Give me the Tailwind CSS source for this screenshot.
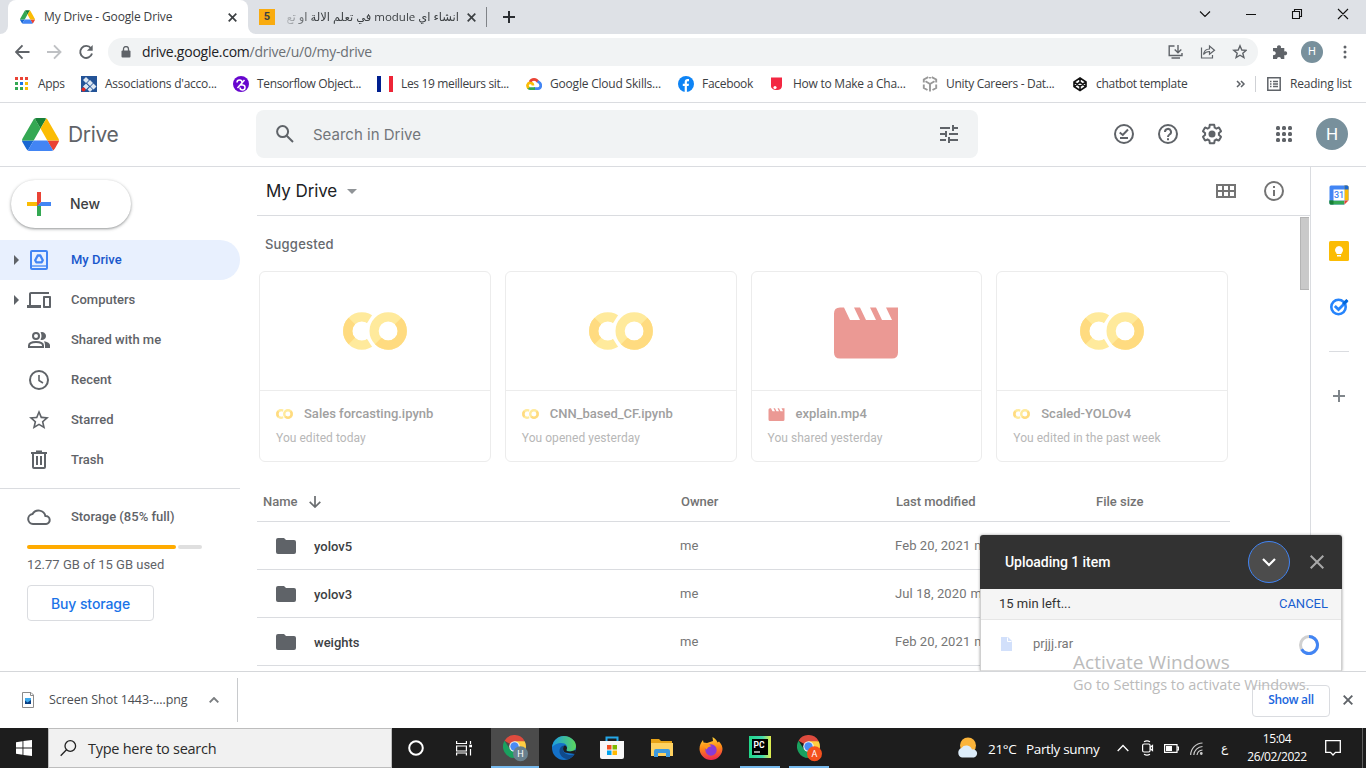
<!DOCTYPE html>
<html lang="en">
<head>
<meta charset="utf-8">
<title>My Drive - Google Drive</title>
<script src="https://cdn.jsdelivr.net/npm/@tailwindcss/browser@4"></script>
</head>
<body class="w-[1366px] h-[768px] overflow-hidden bg-white relative flex flex-col font-['Roboto',sans-serif]">

<!-- shared icon symbols -->
<svg class="hidden">
  <symbol id="colab" viewBox="0 0 64 38">
    <circle cx="18.800" cy="19" r="14.100" fill="none" stroke="#ffea9c" stroke-width="9.200"/>
    <path d="M8.830 9.030A14.100 14.100 0 0 0 8.830 28.970" fill="none" stroke="#ffdb80" stroke-width="9.200"/>
    <path d="M19 19L33 -3H42V41H33Z" fill="#fff"/>
    <path d="M18.800 9.900A9.100 9.100 0 0 1 18.800 28.100Z" fill="#fff"/>
    <circle cx="45.200" cy="19" r="20" fill="#fff"/>
    <circle cx="45.200" cy="19" r="14.100" fill="none" stroke="#ffea9c" stroke-width="9.200"/>
    <path d="M55.170 9.030A14.100 14.100 0 0 1 35.230 28.970" fill="none" stroke="#ffdb80" stroke-width="9.200"/>
  </symbol>
  <symbol id="movie" viewBox="0 0 64 52">
    <path d="M6 .5H10L16 13H26L20 .5H26L32 13H42L36 .5H42L48 13H58L52 .5H64V45.500Q64 51.500 58 51.500H6Q0 51.500 0 45.500V6.500Q0 .500 6 .500Z" fill="#eb9994"/>
  </symbol>
  <symbol id="drive" viewBox="0 0 87.3 78">
    <path d="m6.600 66.850 3.850 6.650c.8 1.400 1.950 2.500 3.300 3.300l13.750-23.800h-27.500c0 1.550.4 3.100 1.200 4.500z" fill="#1967d2"/>
    <path d="m43.650 25-13.750-23.800c-1.350.8-2.500 1.900-3.300 3.300l-25.400 44a9.060 9.060 0 0 0 -1.200 4.500h27.500z" fill="#34a853"/>
    <path d="m73.550 76.800c1.350-.8 2.500-1.900 3.300-3.300l1.600-2.750 7.650-13.250c.8-1.400 1.200-2.950 1.200-4.500h-27.502l5.852 11.500z" fill="#ea4335"/>
    <path d="m43.650 25 13.750-23.800c-1.350-.8-2.900-1.200-4.500-1.200h-18.500c-1.600 0-3.150.450-4.500 1.200z" fill="#188038"/>
    <path d="m59.800 53h-32.300l-13.750 23.800c1.350.8 2.900 1.200 4.500 1.200h50.800c1.600 0 3.150-.45 4.500-1.200z" fill="#4285f4"/>
    <path d="m73.400 26.500-12.700-22c-.8-1.400-1.950-2.500-3.300-3.300l-13.750 23.800 16.150 28h27.450c0-1.550-.4-3.100-1.200-4.500z" fill="#fbbc04"/>
  </symbol>
  <symbol id="chrome" viewBox="0 0 48 48">
    <path d="M24 24L3.200 12A24 24 0 0 1 44.800 12Z" fill="#dd4b3e"/>
    <path d="M33.500 29.500L24 48A24 24 0 0 0 45.300 13H24Z" fill="#ffcd42"/>
    <path d="M14.500 29.500L3.200 12A24 24 0 0 0 24 48L33.500 29.500Z" fill="#1aa15f"/>
    <circle cx="24" cy="24" r="11" fill="#f1f1f1"/><circle cx="24" cy="24" r="8.700" fill="#4a8af4"/>
  </symbol>
  <symbol id="folder" viewBox="0 0 20 16"><path d="M2 0H8L10 2H18A2 2 0 0 1 20 4V14A2 2 0 0 1 18 16H2A2 2 0 0 1 0 14V2A2 2 0 0 1 2 0Z" fill="#5f6368"/></symbol>
</svg>

<!-- tab strip -->
<div class="h-[34px] bg-[#dee1e6] flex font-['Open_Sans',sans-serif] text-[12px] text-[#3c4043] shrink-0">
  <div class="w-2 bg-white"><div class="w-2 h-full bg-[#dee1e6] rounded-br-lg"></div></div>
  <div class="w-[240px] bg-white rounded-t-lg flex items-center pl-3">
    <svg class="w-[15px] h-[14px]"><use href="#drive"/></svg>
    <span class="ml-[9px] w-[129px] whitespace-nowrap tracking-[-0.13px]">My Drive - Google Drive</span>
    <svg class="ml-[55px] w-[9px] h-[9px]" viewBox="0 0 9 9" stroke="#3c4043" stroke-width="1.700"><path d="M.7.7l7.600 7.600M8.300.7L.7 8.300"/></svg>
  </div>
  <div class="w-[240px] bg-white"><div class="h-full bg-[#dee1e6] rounded-bl-lg flex items-center pl-[11px]">
    <div class="size-4 bg-[#f9ab0f] text-[#3c4043] font-bold text-[11px] leading-4 text-center font-['Roboto']">5</div>
    <div dir="rtl" class="ml-1 w-[180px] whitespace-nowrap text-[11.5px] font-['Open_Sans','DejaVu_Sans',sans-serif] [mask-image:linear-gradient(to_right,transparent,black_34px)]">انشاء اي module في تعلم الالة او تع</div>
    <svg class="ml-2 w-[9px] h-[9px] shrink-0" viewBox="0 0 9 9" stroke="#3c4043" stroke-width="1.700"><path d="M.7.7l7.600 7.600M8.300.7L.7 8.300"/></svg>
    <div class="ml-[10px] w-px h-5 bg-[#808388] shrink-0"></div>
  </div></div>
  <svg class="ml-[15px] w-3 self-center" viewBox="0 0 12 12" height="12" stroke="#2a2d31" stroke-width="2"><path d="M6 0V12M0 6H12"/></svg>
  <div class="ml-auto w-[169px] flex items-center -mt-[6px]">
    <svg width="169" height="12" viewBox="0 0 169 12" fill="none" stroke="#111" stroke-width="1.100"><path d="M3 3.500L8 8.500L13 3.500M49 6.500H59M95.500 3.500H102.500V10.500H95.500ZM97.500 3.500V1.500H104.500V8.500H102.500M141 1L151 11M151 1L141 11"/></svg>
  </div>
</div>

<!-- toolbar -->
<div class="h-[35px] flex items-center shrink-0">
  <svg class="ml-[15px]" width="80" height="16" viewBox="0 0 80 16" fill="none" stroke="#5f6368" stroke-width="1.900">
    <path d="M14.500 8H1M7.500 1.300L1 8L7.500 14.700"/><path stroke="#bfc1c4" d="M32 8H45.500M39 1.300L45.500 8L39 14.700"/><path d="M76 4.300A6 6 0 1 0 77 9.500"/><path d="M77.700 1V6.800H71.900Z" fill="#5f6368" stroke="none"/>
  </svg>
  <div class="ml-[13px] w-[1150px] h-7 rounded-full bg-[#f1f3f4] flex items-center">
    <svg class="ml-[13px]" width="10" height="12" viewBox="0 0 10 12"><rect x="0.500" y="4.500" width="9" height="7" rx="1" fill="#5f6368"/><path d="M2.500 5V3A2.500 2.500 0 0 1 7.500 3V5" fill="none" stroke="#5f6368" stroke-width="1.300"/></svg>
    <span class="ml-[11px] font-['Open_Sans',sans-serif] text-[14px] text-[#202124] tracking-[-0.25px] whitespace-nowrap">drive.google.com<span class="text-[#6b6f74]">/drive/u/0/my-drive</span></span>
    <svg class="ml-auto mr-[11px]" width="80" height="16" viewBox="0 0 80 16" fill="none" stroke="#5f6368" stroke-width="1.400">
      <path d="M7.500 2H2.200V11.500H15V9M4.500 14H13M11 1V8M7.700 5.500L11 8.700L14.300 5.500"/>
      <path stroke-width="1.200" d="M34.500 3.500V14H45.500V11M36.500 10.500C37 7 39 5 42.500 5V2L47.500 6.200L42.500 10.300V7.500C40 7.500 38 8.500 36.500 10.500Z"/>
      <path d="M73 1.800L74.800 6L79.200 6.300L75.800 9.200L76.900 13.600L73 11.200L69.100 13.600L70.200 9.200L66.800 6.300L71.200 6Z"/>
    </svg>
  </div>
  <svg class="ml-[14px]" width="16" height="16" viewBox="0 0 16 16" fill="#5f6368"><path d="M1 4H5.200A2 2 0 1 1 8.800 4H12.300V7.400A2 2 0 1 1 12.300 11V15H9A2 2 0 1 0 5 15H1V11A2 2 0 1 0 1 7.300Z"/></svg>
  <div class="ml-[13px] size-[22px] rounded-full bg-[#78909c] text-white text-[11px] leading-[22px] text-center">H</div>
  <svg class="ml-[20px]" width="4" height="14" viewBox="0 0 4 14" fill="#5f6368"><circle cx="2" cy="2" r="1.500"/><circle cx="2" cy="7" r="1.500"/><circle cx="2" cy="12" r="1.500"/></svg>
</div>

<!-- bookmarks -->
<div class="h-[34px] pb-1 border-b border-[#dadce0] flex items-center pl-[15px] font-['Open_Sans',sans-serif] text-[12px] text-[#3c4043] tracking-[-0.3px] whitespace-nowrap shrink-0">
  <div class="w-[66px] flex items-center gap-[10px]">
    <svg width="13" height="13" viewBox="0 0 13 13"><path fill="#ea4335" d="M0 0h3v3H0zM5 0h3v3H5zM10 0h3v3h-3z"/><path fill="#34a853" d="M0 5h3v3H0zM0 10h3v3H0z"/><path fill="#1a73e8" d="M5 5h3v3H5z"/><path fill="#fbbc04" d="M10 5h3v3h-3zM10 10h3v3h-3z"/><path fill="#34a853" d="M5 10h3v3H5z"/></svg><span>Apps</span>
  </div>
  <div class="w-[152px] flex items-center gap-2">
    <svg width="16" height="16" viewBox="0 0 16 16"><path d="M0 0h16v16H0z" fill="#235397"/><path d="M5 1L8 4L5 7L2 4ZM9 4L12 7L9 10L6 7ZM12.500 7.500L15.500 10.500L12.500 13.500L9.500 10.500ZM5 7.500L8 10.500L5 13.500L2 10.500ZM9 11L11.500 13.500L9 16L6.500 13.500Z" fill="#dde7f2"/><circle cx="2.500" cy="13.500" r="2" fill="#e52620"/></svg><span class="tracking-[-0.25px]">Associations d'acco...</span>
  </div>
  <div class="w-[144px] flex items-center gap-2">
    <svg width="16" height="16" viewBox="0 0 16 16" fill="none"><circle cx="8" cy="8" r="8" fill="#6706ce"/><path d="M4 6.500A2.500 2.500 0 1 1 6.500 9H9.500A2.500 2.500 0 1 1 7 11.500M4.500 12L11.500 4" stroke="#fff" stroke-width="1.500"/></svg><span class="tracking-[-0.36px]">Tensorflow Object...</span>
  </div>
  <div class="w-[149px] flex items-center gap-2">
    <svg width="16" height="16" viewBox="0 0 16 16"><path d="M0 0h4v16H0z" fill="#001f8f"/><path d="M12 0h4v16h-4z" fill="#ee2436"/></svg><span class="tracking-[-0.35px]">Les 19 meilleurs sit...</span>
  </div>
  <div class="w-[152px] flex items-center gap-2">
    <svg width="16" height="16" viewBox="0 0 16 16" fill="none" stroke-width="2.700"><path d="M4 6A4.300 4.300 0 0 1 12 6" stroke="#ea4335"/><path d="M11.500 5.500C16 7 15.500 12.500 12 12.700H8" stroke="#4285f4"/><path d="M9 12.700H4C3 12.700 2.500 12.300 2 11.500" stroke="#34a853"/><path d="M2.700 12C.5 10 1.500 6.500 4.500 7C6.500 7 7 8.500 7 9.500" stroke="#fbbc04"/></svg><span class="tracking-[-0.2px]">Google Cloud Skills...</span>
  </div>
  <div class="w-[91px] flex items-center gap-2">
    <svg width="16" height="16" viewBox="0 0 16 16"><circle cx="8" cy="8" r="8" fill="#0e84f5"/><path d="M6.700 16V10H4.800V7.700H6.700V6C6.700 4 7.800 3 9.600 3L11 3.100V5.200H10C9.200 5.200 8.900 5.700 8.900 6.300V7.700H11L10.600 10H8.900V16Z" fill="#fff"/></svg><span>Facebook</span>
  </div>
  <div class="w-[153px] flex items-center gap-2">
    <svg width="16" height="16" viewBox="0 0 16 16"><path d="M2 1.500H13V9.500C13 12.500 11 14 8 14C4.500 14 2 12.500 2 10Z" fill="#f32742"/><circle cx="6" cy="11.500" r="1.600" fill="#fff"/></svg><span class="tracking-[-0.25px]">How to Make a Cha...</span>
  </div>
  <div class="w-[150px] flex items-center gap-2">
    <svg width="16" height="16" viewBox="0 0 16 16" fill="none" stroke="#999" stroke-width="1.900"><path d="M6.300 1.200L1.800 3.500V6.500M9.700 1.200L14.200 3.500V6.500M1.800 8.500V12L5.500 14M14.200 8.500V12L10.500 14M8 8V15.500M8 8L3.500 5.300M8 8L12.500 5.300M8 1V2.500"/></svg><span>Unity Careers - Dat...</span>
  </div>
  <div class="w-[164px] flex items-center gap-2">
    <svg width="16" height="16" viewBox="0 0 16 16" fill="none" stroke="#111" stroke-width="1.600"><path d="M8 2L14 6V10.500L8 14.500L2 10.500V6ZM2 6L8 10.200L14 6M2 10.500L8 6.300L14 10.500M8 2V6.300M8 10.200V14.500"/></svg><span>chatbot template</span>
  </div>
  <svg width="10" height="8" viewBox="0 0 10 8" fill="none" stroke="#5f6368" stroke-width="1.500"><path d="M1 1L4 4L1 7M5 1L8 4L5 7"/></svg>
  <div class="ml-[9px] w-px h-4 bg-[#cfd1d5]"></div>
  <svg class="ml-[11px]" width="14" height="14" viewBox="0 0 14 14" fill="none" stroke="#5f6368" stroke-width="1.500"><path d="M.8.8H13.200V13.200H.8ZM3 4.500H4.500M6 4.500H11M3 7H4.500M6 7H11M3 9.500H4.500M6 9.500H11"/></svg>
  <span class="ml-[9px] tracking-[-0.22px]">Reading list</span>
</div>

<!-- Drive header -->
<header class="h-16 border-b border-[#dadce0] flex items-center shrink-0 text-[#5f6368]">
  <svg class="ml-[21.5px] -mt-[1px]" width="37" height="33" viewBox="0 0 87.3 78"><use href="#drive"/></svg>
  <span class="ml-[9.5px] w-[188px] font-['Inter',sans-serif] text-[21px] tracking-[-0.35px]">Drive</span>
  <div class="w-[722px] h-12 -mt-0.5 rounded-lg bg-[#f1f3f4] flex items-center">
    <svg class="ml-5" width="18" height="18" viewBox="0 0 18 18" fill="none" stroke="#5f6368" stroke-width="2"><circle cx="6.600" cy="6.600" r="5.500"/><path d="M10.700 10.700L17 17"/></svg>
    <span class="ml-[19px] mt-[3px] font-['Inter',sans-serif] text-[15px] text-[#72767a]">Search in Drive</span>
    <svg class="ml-auto mr-[20px]" width="18" height="18" viewBox="0 0 18 18" fill="none" stroke="#5f6368" stroke-width="2"><path d="M0 3H10M13 3H18M13 0V6M0 9H6M6 6V12M9 9H18M0 15H6M9 15H18M9 12V18"/></svg>
  </div>
  <svg class="ml-[136px] -mt-0.5" width="20" height="20" viewBox="0 0 20 20" fill="none" stroke="#5f6368" stroke-width="2"><circle cx="10" cy="10" r="9"/><path d="M5.700 8.500L8.800 11L14 5.500M6 14H14"/></svg>
  <svg class="ml-6 -mt-0.5" width="20" height="20" viewBox="0 0 20 20" fill="none" stroke="#5f6368" stroke-width="2"><circle cx="10" cy="10" r="9"/><path d="M7 8A3 3 0 1 1 11.500 10.500Q10 11.400 10 13M10 14.300V16.300"/></svg>
  <svg class="ml-[23px] -mt-0.5" width="22" height="22" viewBox="1 1 22 22" fill="#5f6368"><path d="M13.850 22.250h-3.700c-.74 0-1.360-.54-1.450-1.270l-.27-1.890c-.27-.14-.53-.29-.79-.46l-1.800.72c-.7.260-1.470-.03-1.810-.65L2.200 15.530c-.35-.66-.2-1.440.36-1.880l1.530-1.190c-.01-.15-.02-.3-.02-.46 0-.15.010-.31.020-.46l-1.520-1.190c-.59-.45-.74-1.260-.37-1.880l1.850-3.190c.34-.62 1.110-.9 1.790-.63l1.810.73c.26-.17.52-.32.78-.46l.27-1.910c.09-.7.71-1.250 1.440-1.250h3.700c.74 0 1.360.54 1.450 1.270l.27 1.890c.27.14.53.29.79.46l1.800-.72c.71-.26 1.480.03 1.820.65l1.840 3.180c.36.66.2 1.440-.36 1.880l-1.520 1.190c.01.15.02.3.02.46s-.01.31-.02.46l1.520 1.190c.56.45.72 1.230.37 1.860l-1.860 3.220c-.34.62-1.110.9-1.800.63l-1.800-.72c-.26.17-.52.32-.78.46l-.27 1.910c-.1.680-.72 1.220-1.460 1.220zm-3.230-2h2.760l.37-2.550.53-.22c.44-.18.88-.44 1.340-.78l.45-.34 2.380.96 1.380-2.400-2.030-1.580.07-.56c.03-.26.06-.51.06-.78s-.03-.53-.06-.78l-.07-.56 2.030-1.580-1.390-2.400-2.390.96-.45-.35c-.42-.32-.87-.58-1.330-.77l-.52-.22-.37-2.550h-2.760l-.37 2.550-.53.21c-.44.19-.88.44-1.340.79l-.45.33-2.380-.95-1.390 2.390 2.030 1.580-.07.560a7 7 0 0 0-.06.790c0 .26.020.53.060.78l.07.56-2.030 1.580 1.380 2.400 2.390-.96.450.35c.43.33.86.58 1.330.77l.53.22.380 2.550z"/><circle cx="12" cy="12" r="3.500"/></svg>
  <svg class="ml-[53px] -mt-0.5" width="16" height="16" viewBox="0 0 16 16" fill="#5f6368"><g><rect width="4" height="4" rx="1.500"/><rect x="6" width="4" height="4" rx="1.500"/><rect x="12" width="4" height="4" rx="1.500"/><rect y="6" width="4" height="4" rx="1.500"/><rect x="6" y="6" width="4" height="4" rx="1.500"/><rect x="12" y="6" width="4" height="4" rx="1.500"/><rect y="12" width="4" height="4" rx="1.500"/><rect x="6" y="12" width="4" height="4" rx="1.500"/><rect x="12" y="12" width="4" height="4" rx="1.500"/></g></svg>
  <div class="ml-6 -mt-0.5 size-8 rounded-full bg-[#78909c] text-white text-[17px] leading-8 text-center">H</div>
</header>

<!-- body -->
<div class="h-[504px] flex shrink-0 overflow-hidden">
  <!-- navigation -->
  <nav class="w-[257px] shrink-0 text-[13px] font-medium text-[#5f6368]">
    <div class="ml-[11px] mt-[13px] w-[120px] h-12 rounded-full shadow-[0_1px_2px_rgba(60,64,67,.35),0_1px_3px_1px_rgba(60,64,67,.18)] flex items-center">
      <svg class="ml-4" width="24" height="24" viewBox="0 0 24 24"><path fill="#fbbc04" d="M0 10h12v4H0z"/><path fill="#34a853" d="M10 12h4v12h-4z"/><path fill="#4285f4" d="M10 14l4-4h10v4z"/><path fill="#ea4335" d="M10 0h4v10l-4 4z"/></svg>
      <span class="ml-[19px] -mt-[2px] font-['Inter',sans-serif] text-[14px] text-[#3c4043] tracking-[-0.1px]">New</span>
    </div>
    <div class="mt-3 h-10 w-60 rounded-r-full bg-[#e8f0fe] text-[#1957cc] flex items-center">
      <svg class="ml-[14px]" width="5" height="10" viewBox="0 0 5 10" fill="#5f6368"><path d="M0 0L5 5L0 10Z"/></svg>
      <svg class="ml-[11px]" width="18" height="20" viewBox="0 0 18 20"><rect x="1" y="1" width="16" height="18" rx="1" fill="none" stroke="#4285f4" stroke-width="2"/><path d="M1 16H17" stroke="#4285f4" stroke-width="1.300"/><path d="M7.700 5.500H10.300L12.800 10.300L11.700 12.300H6.300L5.200 10.300Z" fill="none" stroke="#4285f4" stroke-width="2.300" stroke-linejoin="round"/></svg>
      <span class="ml-[23px]">My Drive</span>
    </div>
    <div class="h-10 flex items-center">
      <svg class="ml-[14px]" width="5" height="10" viewBox="0 0 5 10" fill="#5f6368"><path d="M0 0L5 5L0 10Z"/></svg>
      <svg class="ml-2" width="24" height="24" viewBox="0 0 24 24" fill="#5f6368"><path d="M4 6h18V4H4c-1.100 0-2 .9-2 2v11H0v3h14v-3H4V6zm19 2h-6c-.55 0-1 .45-1 1v10c0 .55.450 1 1 1h6c.55 0 1-.45 1-1V9c0-.55-.45-1-1-1zm-1 10h-4v-8h4v8z"/></svg>
      <span class="ml-5">Computers</span>
    </div>
    <div class="h-10 flex items-center pl-[27px] gap-5">
      <svg width="24" height="24" viewBox="0 0 24 24"><g fill="none" stroke="#5f6368" stroke-width="2"><circle cx="9" cy="8" r="3"/><path d="M2 19V17.500C2 15 6 14 9 14S16 15 16 17.500V19Z"/></g><path fill="#5f6368" d="M13.500 4.300A4 4 0 1 1 13.500 11.700Q15.500 8 13.500 4.300ZM17 13.300C20 13.800 23 15 23 17.500V20H18V17.500Q18 15 17 13.300Z"/></svg>
      <span>Shared with me</span>
    </div>
    <div class="h-10 flex items-center pl-[27px] gap-5">
      <svg width="24" height="24" viewBox="0 0 24 24" fill="none" stroke="#5f6368" stroke-width="2"><circle cx="12" cy="12" r="9"/><path stroke-width="1.600" d="M12 7V12.500L16 15"/></svg>
      <span>Recent</span>
    </div>
    <div class="h-10 flex items-center pl-[27px] gap-5">
      <svg width="24" height="24" viewBox="0 0 24 24" fill="#5f6368"><path d="M22 9.240l-7.190-.62L12 2 9.190 8.630 2 9.240l5.460 4.730L5.820 21 12 17.270 18.180 21l-1.630-7.030L22 9.240zM12 15.400l-3.760 2.270 1-4.280-3.320-2.880 4.380-.38L12 6.100l1.710 4.040 4.380.38-3.320 2.880 1 4.280L12 15.400z"/></svg>
      <span>Starred</span>
    </div>
    <div class="h-10 flex items-center pl-[27px] gap-5">
      <svg width="24" height="24" viewBox="0 0 24 24" fill="none" stroke="#5f6368" stroke-width="2"><path d="M4 5H20M9 3.500H15M6 5V19Q6 20 7 20H17Q18 20 18 19V5M10 8V17M14 8V17"/></svg>
      <span>Trash</span>
    </div>
    <div class="mt-2 w-60 h-px bg-[#dadce0]"></div>
    <div class="mt-4 h-6 flex items-center pl-[27px] gap-5">
      <svg width="24" height="24" viewBox="0 0 24 24" fill="none" stroke="#5f6368" stroke-width="2"><path d="M6 19A5 5 0 0 1 5.500 9.050A7 7 0 0 1 18.400 11A4 4 0 0 1 19 19Z"/></svg>
      <span>Storage (85% full)</span>
    </div>
    <div class="ml-[27px] mt-4 w-[175px] h-1 flex gap-[2px]"><div class="w-[149px] bg-[#ffab00] rounded-full"></div><div class="flex-1 bg-[#dfdfdf] rounded-full"></div></div>
    <div class="ml-[27px] mt-[6px] leading-5 font-normal">12.77 GB of 15 GB used</div>
    <div class="ml-[27px] mt-[10px] w-[127px] h-9 rounded border border-[#dadce0] text-[#1a73e8] text-[14px] leading-[35px] text-center font-['Inter',sans-serif] tracking-[-0.1px]">Buy storage</div>
  </nav>

  <!-- file area -->
  <main class="w-[1053px] shrink-0 flex flex-col">
    <div class="h-[49px] border-b border-[#dadce0] flex items-center text-[#202124] shrink-0">
      <span class="ml-[9px] mt-[2px] font-['Inter',sans-serif] text-[17px] tracking-[-0.1px]">My Drive</span>
      <svg class="ml-[10px]" width="10" height="5" viewBox="0 0 10 5" fill="#909497"><path d="M0 0H10L5 5Z"/></svg>
      <svg class="ml-auto" width="20" height="14" viewBox="0 0 20 14" fill="none" stroke="#747474" stroke-width="2"><path d="M1 1H19V13H1ZM1 7H19M7 1V13M13 1V13"/></svg>
      <svg class="ml-7 mr-[26px]" width="20" height="20" viewBox="0 0 20 20" fill="none" stroke="#747474" stroke-width="2"><circle cx="10" cy="10" r="9"/><path d="M10 9V15M10 5V7"/></svg>
    </div>
    <div class="flex-1 flex">
      <div class="w-[973px]">
        <div class="ml-2 mt-[18px] h-5 leading-5 font-['Inter',sans-serif] font-medium text-[13px] text-[#66696d] tracking-[0.2px]">Suggested</div>
        <div class="ml-[2px] mt-[17px] w-[969px] h-[191px] grid grid-cols-4 gap-[14px] text-[12px] text-[#b7b7b7]">
          <div class="border border-[#ececec] rounded-md flex flex-col">
            <div class="h-[119px] border-b border-[#ececec] flex items-center justify-center"><svg width="64" height="38"><use href="#colab"/></svg></div>
            <div class="pl-4 pt-3">
              <div class="h-[22px] flex items-center gap-[11px] text-[13px] text-[#a0a0a0] font-medium"><svg width="17" height="10"><use href="#colab"/></svg>Sales forcasting.ipynb</div>
              <div class="mt-[3px] leading-5 tracking-[0.05px]">You edited today</div>
            </div>
          </div>
          <div class="border border-[#ececec] rounded-md flex flex-col">
            <div class="h-[119px] border-b border-[#ececec] flex items-center justify-center"><svg width="64" height="38"><use href="#colab"/></svg></div>
            <div class="pl-4 pt-3">
              <div class="h-[22px] flex items-center gap-[11px] text-[13px] text-[#a0a0a0] font-medium"><svg width="17" height="10"><use href="#colab"/></svg>CNN_based_CF.ipynb</div>
              <div class="mt-[3px] leading-5 tracking-[0.05px]">You opened yesterday</div>
            </div>
          </div>
          <div class="border border-[#ececec] rounded-md flex flex-col">
            <div class="h-[119px] border-b border-[#ececec] flex items-center justify-center"><svg width="64" height="52" class="mt-[3px]"><use href="#movie"/></svg></div>
            <div class="pl-4 pt-3">
              <div class="h-[22px] flex items-center gap-[11px] text-[13px] text-[#a0a0a0] font-medium"><svg width="17" height="13"><use href="#movie"/></svg>explain.mp4</div>
              <div class="mt-[3px] leading-5 tracking-[0.05px]">You shared yesterday</div>
            </div>
          </div>
          <div class="border border-[#ececec] rounded-md flex flex-col">
            <div class="h-[119px] border-b border-[#ececec] flex items-center justify-center"><svg width="64" height="38"><use href="#colab"/></svg></div>
            <div class="pl-4 pt-3">
              <div class="h-[22px] flex items-center gap-[11px] text-[13px] text-[#a0a0a0] font-medium"><svg width="17" height="10"><use href="#colab"/></svg>Scaled-YOLOv4</div>
              <div class="mt-[3px] leading-5 tracking-[0.05px]">You edited in the past week</div>
            </div>
          </div>
        </div>
        <div class="mt-[19px] h-[41px] pt-px border-b border-[#dadce0] flex items-center text-[13px] font-medium text-[#737373]">
          <div class="w-[424px] pl-[6px] flex items-center gap-[11px]">Name <svg width="12" height="12" viewBox="0 0 12 12" fill="none" stroke="#6a6d70" stroke-width="1.700"><path d="M6 0V11M.7 5.800L6 11L11.300 5.800"/></svg></div>
          <div class="w-[215px]">Owner</div><div class="w-[200px]">Last modified</div><div>File size</div>
        </div>
        <div class="h-12 border-b border-[#dadce0] flex items-center text-[13px] text-[#767676] whitespace-nowrap">
          <svg class="ml-[19px]" width="20" height="16"><use href="#folder"/></svg><span class="ml-[18px] mt-[2px] w-[366px] font-medium text-[#3c4043]">yolov5</span><span class="w-[215px] tracking-[0.1px]">me</span><span class="tracking-[0.1px]">Feb 20, 2021</span><span class="ml-[4px]">me</span>
        </div>
        <div class="h-12 border-b border-[#dadce0] flex items-center text-[13px] text-[#767676] whitespace-nowrap">
          <svg class="ml-[19px]" width="20" height="16"><use href="#folder"/></svg><span class="ml-[18px] mt-[2px] w-[366px] font-medium text-[#3c4043]">yolov3</span><span class="w-[215px] tracking-[0.1px]">me</span><span class="tracking-[0.1px]">Jul 18, 2020</span><span class="ml-[4px]">me</span>
        </div>
        <div class="h-12 border-b border-[#dadce0] flex items-center text-[13px] text-[#767676] whitespace-nowrap">
          <svg class="ml-[19px]" width="20" height="16"><use href="#folder"/></svg><span class="ml-[18px] mt-[2px] w-[366px] font-medium text-[#3c4043]">weights</span><span class="w-[215px] tracking-[0.1px]">me</span><span class="tracking-[0.1px]">Feb 20, 2021</span><span class="ml-[4px]">me</span>
        </div>
      </div>
      <div class="ml-auto mr-px mt-px w-[9px] h-[73px] bg-[#c9c9c9] border border-[#b4b4b4] border-r-0"></div>
    </div>
  </main>

  <!-- side panel -->
  <aside class="w-14 border-l border-[#dadce0] flex flex-col items-center pt-[18px]">
    <svg width="20" height="20" viewBox="0 0 20 20"><rect x="0.500" y=".5" width="19" height="19" rx="1.500" fill="#4285f4"/><path d="M15.500.5H18Q19.500.5 19.500 2V15.500H15.500Z" fill="#fbbc04"/><path d="M.5 15.500H15.500V19.500H2Q.5 19.500.5 18Z" fill="#34a853"/><path d="M.5 15.500H4.500V19.500H2Q.5 19.500.5 18Z" fill="#188038"/><path d="M15.500.5H18Q19.500.5 19.500 2V4.500H15.500Z" fill="#1967d2"/><path d="M15.500 15.500H20V20H15.500Z" fill="#fff"/><path d="M15.500 15.500H19.500L15.500 19.500Z" fill="#ea4335"/><path d="M4.500 4.500h11v11h-11z" fill="#fff"/><text x="10" y="13.200" font-size="9" text-anchor="middle" fill="#4285f4" font-weight="500" font-family="Roboto">31</text></svg>
    <svg class="mt-9" width="20" height="20" viewBox="0 0 20 20"><rect width="20" height="20" rx="1.500" fill="#fbbc04"/><path d="M10 5A4.100 4.100 0 0 1 12.500 12.200V13H7.500V12.200A4.100 4.100 0 0 1 10 5ZM8 14H12V15.500H8Z" fill="#fff"/></svg>
    <svg class="mt-[35px]" width="20" height="20" viewBox="0 0 20 20" fill="none"><circle cx="9.500" cy="11" r="7.200" stroke="#2684fc" stroke-width="2.600"/><path d="M5.800 10L9.500 13.500L18.500 4.500" stroke="#2684fc" stroke-width="2.800"/><path d="M13 7.200L17.300 3L19.300 4.800L15.500 9Z" fill="#0066da"/></svg>
    <div class="mt-[35px] w-5 h-px bg-[#dadce0]"></div>
    <svg class="mt-[38px]" width="12" height="12" viewBox="0 0 12 12" stroke="#80868b" stroke-width="2"><path d="M6 0V12M0 6H12"/></svg>
  </aside>
</div>

<!-- downloads bar -->
<div class="h-[57px] border-t border-[#d5d7da] flex items-center font-['Open_Sans',sans-serif] text-[12px] text-[#4b4e52] shrink-0">
  <svg class="ml-[22px]" width="12" height="16" viewBox="0 0 12 16"><path d="M.5.500H9L11.500 3V15.500H.500Z" fill="#fff" stroke="#8b8b8b"/><path d="M8.500.500V3.500H11.500" fill="none" stroke="#8b8b8b"/><path d="M3 6h6v6H3z" fill="#3fa9ec"/><path d="M3 12V8.500L5.500 10.500L9 8V12Z" fill="#0a3f83"/></svg>
  <span class="ml-[15px] mt-px w-[142px] whitespace-nowrap text-[12.5px] tracking-[-0.08px]">Screen Shot 1443-....png</span>
  <svg class="ml-[18px]" width="10" height="6" viewBox="0 0 10 6" fill="none" stroke="#7a7d80" stroke-width="1.900"><path d="M.7 5.300L5 1L9.300 5.300"/></svg>
  <div class="ml-[18px] w-px h-11 mb-px bg-[#c8cacd]"></div>
  <div class="ml-auto w-[78px] h-8 mt-px border border-[#dadce0] rounded text-center leading-[27px] text-[#1a66dd] font-semibold tracking-[-0.35px]">Show all</div>
  <svg class="ml-[13px] mr-[13px]" width="10" height="10" viewBox="0 0 10 10" stroke="#5f6368" stroke-width="1.900"><path d="M.7.7L9.300 9.300M9.300.7L.7 9.300"/></svg>
</div>

<!-- taskbar -->
<div class="h-10 bg-[#1d1d1d] flex items-center text-white font-['Open_Sans',sans-serif] text-[12px] shrink-0">
  <svg class="ml-4" width="16" height="16" viewBox="0 0 16 16" fill="#fff"><path d="M0 2.200L6.500 1.300V7.600H0ZM7.400 1.100L16 0V7.600H7.400ZM0 8.500H6.500V14.700L0 13.800ZM7.400 8.500H16V16L7.400 14.900Z"/></svg>
  <div class="ml-4 w-[344px] h-10 bg-[#f1f1f1] border border-[#bdbdbd] flex items-center">
    <svg class="ml-[11px]" width="17" height="17" viewBox="0 0 17 17" fill="none" stroke="#222" stroke-width="1.300"><circle cx="10.300" cy="6" r="5.300"/><path d="M6.500 9.800L.7 15.800"/></svg>
    <span class="ml-[11px] mt-[2px] text-[14.5px] text-[#2b2b2b] tracking-[-0.27px]">Type here to search</span>
  </div>
  <svg class="ml-4" width="16" height="16" viewBox="0 0 16 16" fill="none" stroke="#fff" stroke-width="2"><circle cx="8" cy="8" r="6.800"/></svg>
  <svg class="ml-8" width="16" height="16" viewBox="0 0 16 16" fill="none" stroke="#fff" stroke-width="1.200"><path d="M.6 1V3.500H10.400V1M.6 6H10.400V11H.6ZM.6 15.500V13H10.400V15.500M14.500 1V4M14.500 9V15.500"/><path stroke-width="2.500" d="M13.200 6H16"/></svg>
  <div class="ml-[19px] w-12 h-10 bg-[#4b4b4b] border-b-2 border-[#76b9ed] flex items-center justify-center">
    <svg class="mt-[3px]" width="26" height="27" viewBox="0 0 26 27"><svg x="1" width="23" height="23"><use href="#chrome"/></svg><circle cx="18.500" cy="18.700" r="7.500" fill="#68808d"/><text x="18.500" y="22" font-size="9" text-anchor="middle" fill="#fff" font-family="Roboto">H</text></svg>
  </div>
  <svg class="ml-[13px]" width="24" height="24" viewBox="0 0 24 24"><defs><linearGradient id="eg" x1="0" x2="1"><stop stop-color="#1b9de2"/><stop offset="1" stop-color="#5bd65c"/></linearGradient></defs><circle cx="12" cy="12" r="12" fill="#1471c8"/><path d="M0 11.500C1 4.500 6 0 12 0S24 4.500 24 10C24 13.500 21.500 15.500 18.500 15.500C16 15.500 14 14.800 14.600 13.500C16.500 10.500 14 7 9.500 7C5.500 7 1.500 9 0 11.500Z" fill="url(#eg)"/><path d="M8.500 11.500C5.500 16 9 22.500 16 23.300C18.500 22.500 21.500 20.500 22.800 18.300C17 20.500 11 17.500 11 13.500Q11 11 13 9.500Q10 9 8.500 11.500Z" fill="#104a8b"/><path d="M13 9.300C10.500 11 10.500 14.500 13 16.500L22.800 18L24 14L18 15.500C15 15.500 14 14.800 14.600 13.500Q16 11 13 9.300Z" fill="#1d1d1d"/></svg>
  <svg class="ml-6" width="24" height="24" viewBox="0 0 24 24"><path d="M6.500 6V1.500H17.500V6" fill="none" stroke="#25a7e8" stroke-width="2"/><path d="M0 5h24v16q0 2-2 2H2q-2 0-2-2z" fill="#f7f7f7"/><path d="M7 9h4.500v4.500H7z" fill="#f25022"/><path d="M12.500 9H17v4.500h-4.500z" fill="#7fba00"/><path d="M7 14.500h4.500V19H7z" fill="#00a4ef"/><path d="M12.500 14.500H17V19h-4.500z" fill="#ffb900"/></svg>
  <svg class="ml-[27px]" width="22" height="20" viewBox="0 0 22 20"><path d="M0 1h8l2 2h11v3H0z" fill="#e8a317"/><path d="M0 5h22v13H0z" fill="#ffd261"/><path d="M3 19V13Q3 11 5 11H17Q19 11 19 13V19H15V15H7V19Z" fill="#3e9ade"/></svg>
  <svg class="ml-[26px]" width="24" height="24" viewBox="0 0 24 24"><defs><linearGradient id="fg" y1="0" y2="1" x2=".1"><stop stop-color="#ffdc3e"/><stop offset=".5" stop-color="#ff8a16"/><stop offset="1" stop-color="#f02c4f"/></linearGradient></defs><path d="M12 24A11.500 11.500 0 0 1 .5 13C.5 9 2 6.500 4 4L4.500 6.500L8 7L14 5L13.500 1C17 3 18 5 18.500 6.500L20 5.500C22.500 8 23.500 10.500 23.500 13A11.500 11.500 0 0 1 12 24Z" fill="url(#fg)"/><circle cx="12" cy="14" r="5.700" fill="#8a3bd6"/><path d="M4 8.500C7 7 10 8 12.500 10.300C9 10.500 9 12 7.500 13.500Q5 11 4 8.500Z" fill="#ff9b1b"/></svg>
  <div class="ml-[17px] w-10 h-10 border-b-2 border-[#76b9ed] flex items-center justify-center">
    <svg width="22" height="22" viewBox="0 0 22 22"><defs><linearGradient id="pg"><stop stop-color="#21d789"/><stop offset=".6" stop-color="#3fd8b0"/><stop offset="1" stop-color="#e6ee4b"/></linearGradient></defs><path d="M0 0h22v22H0z" fill="url(#pg)"/><path d="M3 3h16v16H3z" fill="#000"/><text x="4.500" y="11.500" font-size="8.500" font-weight="700" fill="#fff" font-family="Roboto">PC</text><path d="M5 16H11" stroke="#fff" stroke-width="1.200"/></svg>
  </div>
  <div class="ml-[9px] w-10 h-10 border-b-2 border-[#76b9ed] flex items-center justify-center">
    <svg class="mt-[3px]" width="26" height="27" viewBox="0 0 26 27"><svg x="1" width="23" height="23"><use href="#chrome"/></svg><circle cx="18.500" cy="18.700" r="7.500" fill="#f4511e"/><text x="18.500" y="22" font-size="9" text-anchor="middle" fill="#fff" font-family="Roboto">A</text></svg>
  </div>
  <svg class="ml-[128px]" width="22" height="22" viewBox="0 0 22 22"><circle cx="11" cy="8.500" r="8" fill="#fbb43a"/><path d="M5 20.500A5 5 0 0 1 4.500 11A6 6 0 0 1 15 12.500A4 4 0 0 1 17 20.500Z" fill="#dcecf9"/></svg>
  <span class="ml-[9px] mt-[2px] w-[38px] text-[13.5px] tracking-[-0.3px]">21°C</span>
  <span class="w-[82px] mt-[2px] text-[13.5px] tracking-[-0.35px] whitespace-nowrap">Partly sunny</span>
  <svg class="ml-[9px]" width="12" height="8" viewBox="0 0 12 8" fill="none" stroke="#fff" stroke-width="1.300"><path d="M.7 7L6 1.500L11.300 7"/></svg>
  <svg class="ml-[13px]" width="12" height="16" viewBox="0 0 12 16" fill="none" stroke="#fff" stroke-width="1.200"><rect x="0.600" y="4" width="7.500" height="8" rx="1.500"/><path d="M8 7.500L10.500 5.500V10.500L8 8.500M2 1.800Q5 0 8 1.800M2 14.200Q5 16 8 14.200"/></svg>
  <svg class="ml-[10px]" width="15" height="9" viewBox="0 0 15 9"><path d="M.6.600H13V8.400H.600ZM13 3H14.500V6H13" fill="none" stroke="#fff" stroke-width="1.200"/><path d="M2 2H8V7H2Z" fill="#fff"/></svg>
  <svg class="ml-[11px]" width="13" height="13" viewBox="0 0 13 13" fill="none" stroke="#ccc" stroke-width="1.200"><path d="M.7 13A12 12 0 0 1 12.500 1M3.800 13A9 9 0 0 1 12.500 4.500M7 13A6 6 0 0 1 12.500 8"/><circle cx="11.300" cy="11.500" r=".8" fill="#ccc"/></svg>
  <span class="ml-[18px] w-4 text-[12px] font-['DejaVu_Sans',sans-serif]">ع</span>
  <div class="ml-[8px] w-[64px] text-center leading-[18px] tracking-[-0.42px] whitespace-nowrap">15:04<br>26/02/2022</div>
  <svg class="ml-4" width="16" height="16" viewBox="0 0 16 16" fill="none" stroke="#fff" stroke-width="1.300"><path d="M.7.700H15.300V12.300H10.500L8 15L5.500 12.300H.700Z"/></svg>
  <div class="ml-auto mr-[3px] w-px h-10 bg-[#5e5e5e]"></div>
</div>

<!-- upload dialog -->
<div class="absolute left-[980px] top-[535px] w-[362px] h-[136px] rounded-t-[3px] overflow-hidden bg-white shadow-[0_0_3px_rgba(0,0,0,.4)] [clip-path:inset(-4px_-4px_0_-4px)]">
  <div class="h-[54px] bg-[#323232] flex items-center">
    <span class="ml-[25px] text-[14px] font-medium text-white tracking-[-0.05px]">Uploading 1 item</span>
    <div class="ml-auto size-[42px] rounded-full bg-[#4c4c4c] border border-[#4285f4] flex items-center justify-center"><svg width="14" height="9" viewBox="0 0 14 9" fill="none" stroke="#fff" stroke-width="2.200"><path d="M1 1L7 7L13 1"/></svg></div>
    <svg class="ml-5 mr-[18px]" width="14" height="14" viewBox="0 0 14 14" stroke="#a9a9a9" stroke-width="2"><path d="M.7.7L13.300 13.300M13.300.7L.7 13.300"/></svg>
  </div>
  <div class="border-x border-[#d0d0d0] h-[82px]">
    <div class="h-[31px] bg-[#f5f5f5] border-b border-[#e6e6e6] flex items-center justify-between pl-[18px] pr-[13px] text-[13px]"><span class="text-[#333]">15 min left...</span><span class="text-[#1a5fd0]">CANCEL</span></div>
    <div class="h-[50px] pb-[2px] flex items-center text-[13px] text-[#777]">
      <svg class="ml-5 -mt-[1px]" width="11" height="14" viewBox="0 0 11 14"><path d="M0 0H7L11 4V14H0Z" fill="#d2e0fb"/><path d="M6.500 .5V4.500H10.500" fill="none" stroke="#fff"/></svg>
      <span class="ml-[21px]">prjjj.rar</span>
      <svg class="ml-auto mr-[22px] mt-[2px]" width="20" height="20" viewBox="0 0 20 20" fill="none" stroke-width="3"><circle cx="10" cy="10" r="8.500" stroke="#d0d0d0"/><path stroke="#4285f4" d="M10 1.500A8.500 8.500 0 1 1 2.600 14.200"/></svg>
    </div>
    <div class="h-px bg-[#dedede]"></div>
  </div>
</div>

<!-- activation watermark -->
<div class="absolute left-[1073px] top-[650px] font-['Open_Sans',sans-serif] text-[#bbb] whitespace-nowrap">
  <div class="text-[19px] leading-6 tracking-[0.05px]">Activate Windows</div>
  <div class="text-[14.5px] leading-[21px] tracking-[-0.03px]">Go to Settings to activate Windows.</div>
</div>
</body>
</html>
